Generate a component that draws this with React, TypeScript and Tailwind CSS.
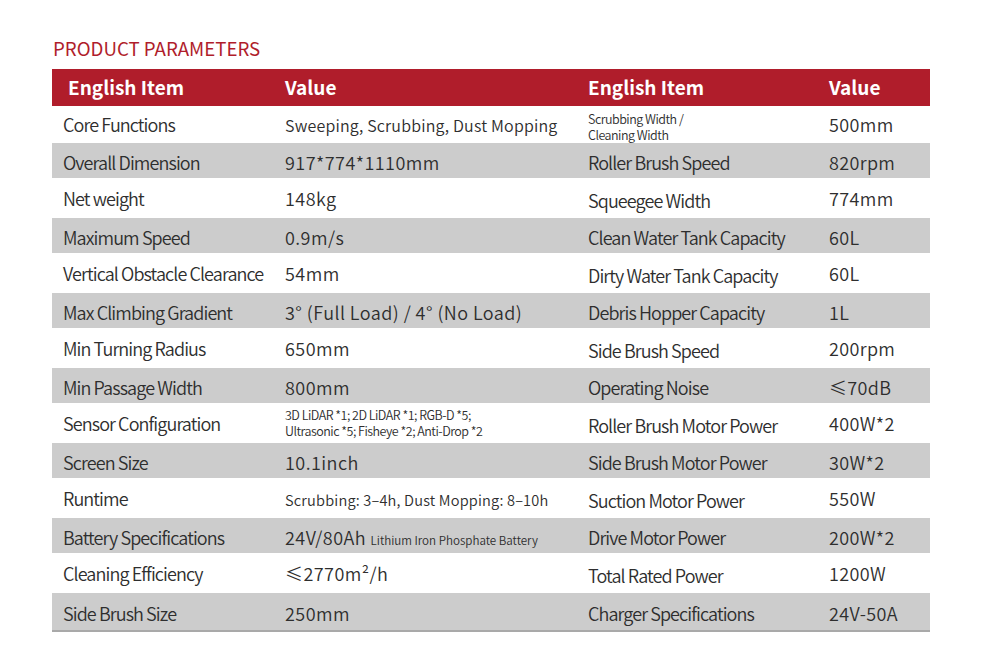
const rows: [React.ReactNode, React.ReactNode, React.ReactNode, React.ReactNode][] = [
  [
    "Core Functions",
    <span className="text-[16px] tracking-[0.012em]">Sweeping, Scrubbing, Dust Mopping</span>,
    <span className="block text-[12.5px] leading-[16px] tracking-[-0.04em]">
      Scrubbing Width /<br />
      Cleaning Width
    </span>,
    "500mm",
  ],
  ["Overall Dimension", "917*774*1110mm", "Roller Brush Speed", "820rpm"],
  ["Net weight", "148kg", "Squeegee Width", "774mm"],
  ["Maximum Speed", "0.9m/s", "Clean Water Tank Capacity", "60L"],
  ["Vertical Obstacle Clearance", "54mm", "Dirty Water Tank Capacity", "60L"],
  ["Max Climbing Gradient", "3° (Full Load) / 4° (No Load)", "Debris Hopper Capacity", "1L"],
  ["Min Turning Radius", "650mm", "Side Brush Speed", "200rpm"],
  ["Min Passage Width", "800mm", "Operating Noise", "≤70dB"],
  [
    "Sensor Configuration",
    <span className="block text-[12.5px] leading-[16px] tracking-[-0.04em]">
      3D LiDAR *1; 2D LiDAR *1; RGB-D *5;
      <br />
      Ultrasonic *5; Fisheye *2; Anti-Drop *2
    </span>,
    "Roller Brush Motor Power",
    "400W*2",
  ],
  ["Screen Size", "10.1inch", "Side Brush Motor Power", "30W*2"],
  [
    "Runtime",
    <span className="text-[14.6px] tracking-[0.012em]">Scrubbing: 3–4h, Dust Mopping: 8–10h</span>,
    "Suction Motor Power",
    "550W",
  ],
  [
    "Battery Specifications",
    <span>
      24V/80Ah <span className="text-[11.6px] tracking-normal">Lithium Iron Phosphate Battery</span>
    </span>,
    "Drive Motor Power",
    "200W*2",
  ],
  ["Cleaning Efficiency", "≤2770m²/h", "Total Rated Power", "1200W"],
  ["Side Brush Size", "250mm", "Charger Specifications", "24V-50A"],
];

// white and grey bands are not the same height in the source
const heights = [
  "h-[37px]", "h-[35px]", "h-[40px]", "h-[35px]", "h-[40px]", "h-[35px]", "h-[40px]",
  "h-[35px]", "h-[40px]", "h-[35px]", "h-[40px]", "h-[35px]", "h-[40px]", "h-[37px]",
];

export default function App() {
  return (
    <div className="w-[987px] h-[663px] bg-white pl-[52px] pt-[35px] font-['Noto_Sans_CJK_SC','Noto_Sans',sans-serif] text-[#2e2e2e] font-[350]">
      <h2 className="pl-[1px] text-[18.7px] leading-[25px] text-[#b01d2b] font-normal">PRODUCT PARAMETERS</h2>

      <div className="mt-[9px] w-[878px] border-b-2 border-[#a9a9a9]">
        <div className="flex h-[37px] items-center bg-[#b01d2b] text-white font-bold text-[19px]">
          <div className="w-[223px] pl-[16px]">English Item</div>
          <div className="w-[302px] pl-[10px]">Value</div>
          <div className="w-[242px] pl-[11px]">English Item</div>
          <div className="flex-1 pl-[10px]">Value</div>
        </div>

        {rows.map((r, i) => (
          <div
            key={i}
            className={`flex items-center ${heights[i]} ${i % 2 === 1 ? "bg-[#cccccc]" : "bg-white"}`}
          >
            <div className={`w-[223px] pl-[11px] text-[18px] tracking-[-0.05em] whitespace-nowrap ${i % 2 === 1 ? "pt-[3px]" : ""}`}>{r[0]}</div>
            <div className={`w-[302px] pl-[10px] text-[18px] tracking-[0.025em] whitespace-nowrap ${i % 2 === 1 ? "pt-[3px]" : ""}`}>{r[1]}</div>
            <div className="w-[242px] pl-[11px] pt-[4px] text-[18px] tracking-[-0.05em] whitespace-nowrap">{r[2]}</div>
            <div className={`flex-1 pl-[10px] text-[18px] tracking-[0.02em] whitespace-nowrap ${i % 2 === 1 ? "pt-[3px]" : ""}`}>{r[3]}</div>
          </div>
        ))}
      </div>
    </div>
  );
}
